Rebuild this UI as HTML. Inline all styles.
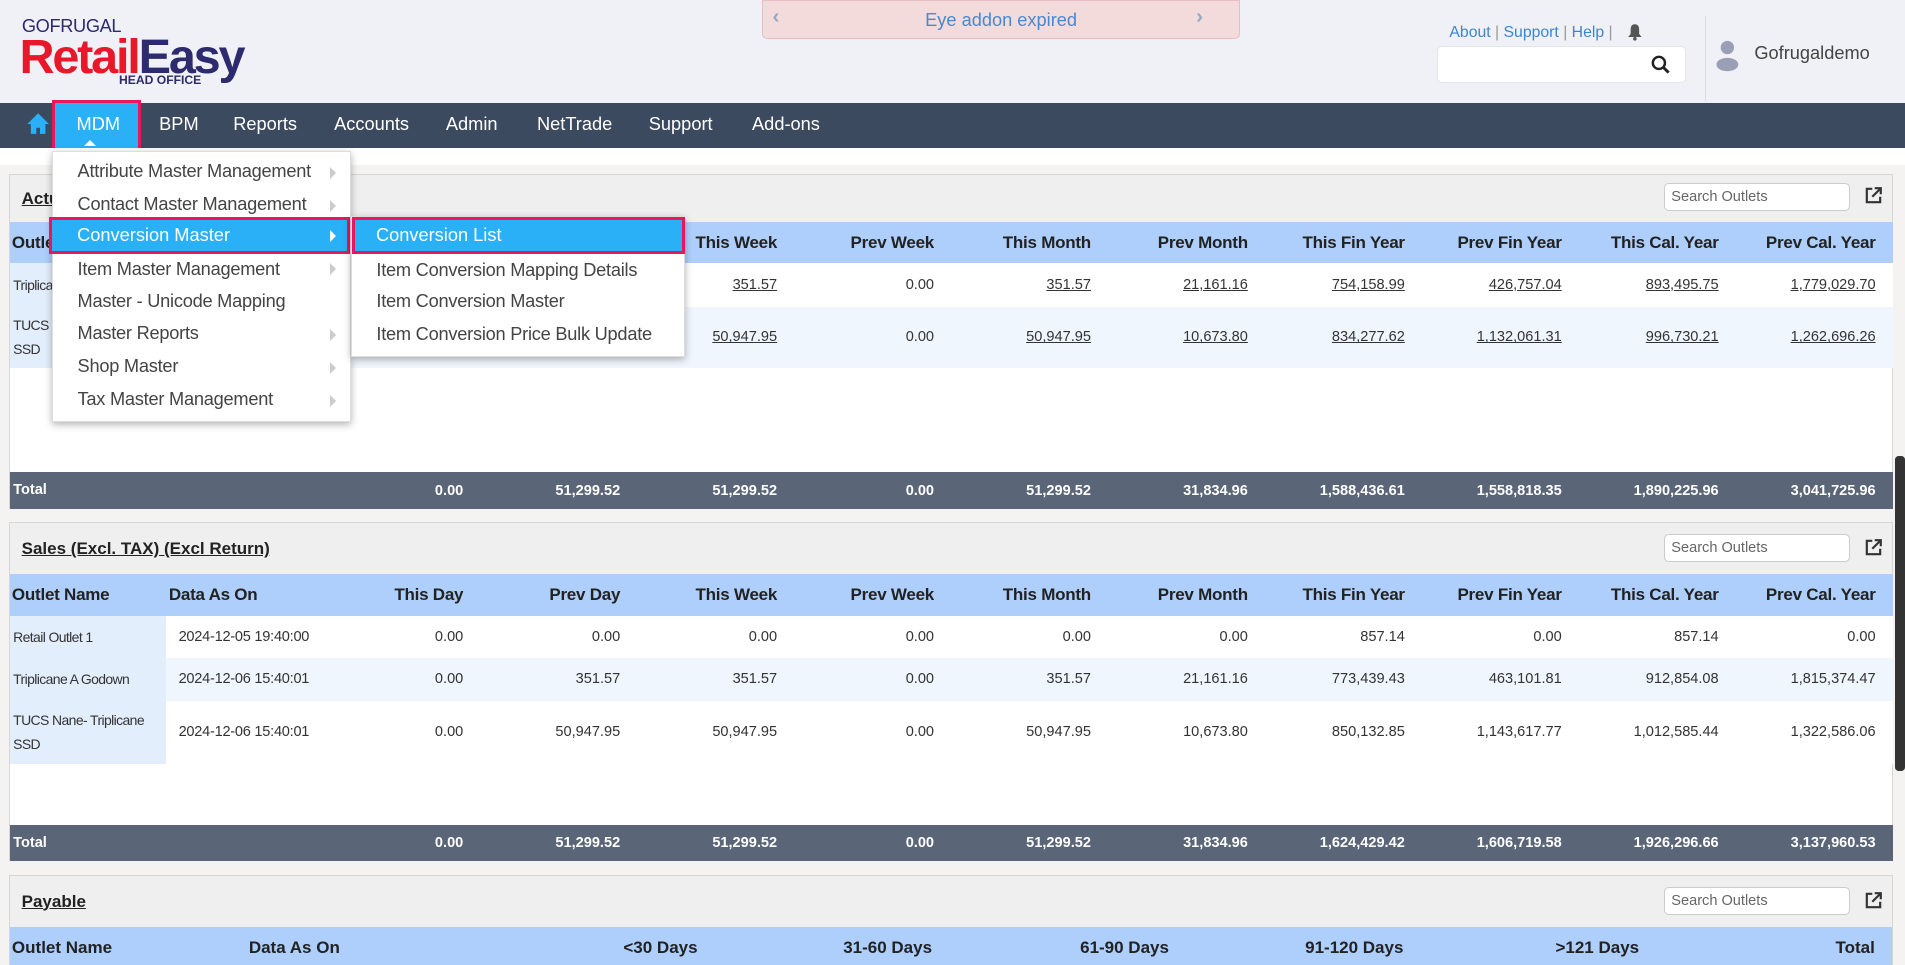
<!DOCTYPE html>
<html><head><meta charset="utf-8">
<style>
*{box-sizing:border-box;margin:0;padding:0}
html,body{width:1905px;height:964px;overflow:hidden}
body{zoom:1.21492;background:#f4f3f1;font-family:"Liberation Sans",sans-serif;color:#333;position:relative;width:1568px;height:794px}
.abs{position:absolute}
#hdr{left:0;top:0;width:1568px;height:85px;background:#f0f1f7}
#nav{left:0;top:85px;width:1568px;height:37px;background:#3b4a5f}
#nav span{position:absolute;top:9px;color:#fff;font-size:15px}
.panel{position:absolute;left:7px;width:1551px;border:1px solid #d6d6d6;background:#fff}
.ph{height:39px;background:#efefef;position:relative}
.ph .t{position:absolute;left:10px;top:12px;font-weight:bold;font-size:14px;text-decoration:underline;color:#222}
.ph .s{position:absolute;left:1362px;top:7px;width:153px;height:23px;border:1px solid #ccc;border-radius:4px;background:#fff;font-size:12px;color:#666;padding:4px 5px}
.ph svg{position:absolute;left:1527px;top:10px}
table{border-collapse:collapse;table-layout:fixed;width:1550px}
th{height:34px;background:#aecffc;font-size:14px;color:#222;text-align:right;padding-right:14px;white-space:nowrap;letter-spacing:-0.2px}
th.l{text-align:left;padding-left:2px}
td{font-size:12px;text-align:right;padding-right:14px;color:#333;white-space:nowrap}
td.l{text-align:left;padding-left:3px;padding-right:0;line-height:20px;white-space:normal;letter-spacing:-0.5px;font-size:11.5px}
td.d{text-align:left;padding-left:10px;letter-spacing:-0.2px}
tr.a td{background:#fff}
tr.b td{background:#f0f6fe}
td.o{background:#e3eefd!important}
tr.tot td{background:#5a6577;color:#fff;font-weight:bold;height:30px;font-size:12px;letter-spacing:0}
u{text-decoration:underline}
.menu{position:absolute;background:#fff;box-shadow:0 2px 6px rgba(0,0,0,.3);border:1px solid #ddd}
.mi{position:absolute;left:20px;font-size:15px;color:#444;letter-spacing:-0.2px}
.ar{position:absolute;width:0;height:0;border-top:5px solid transparent;border-bottom:5px solid transparent;border-left:5px solid #ccc}
</style></head><body>
<div id="hdr" class="abs">
  <div class="abs" style="left:18px;top:13px;font-size:15px;color:#2d2a6e;letter-spacing:-0.3px">GOFRUGAL</div>
  <div class="abs" style="left:16px;top:26px;font-size:40px;font-weight:bold;letter-spacing:-1.8px;line-height:42px"><span style="color:#e8172a">Retail</span><span style="color:#2d2a6e">Easy</span></div>
  <div class="abs" style="left:98px;top:60px;font-size:10px;font-weight:bold;color:#2d2a6e">HEAD OFFICE</div>
  <div class="abs" style="left:627px;top:0;width:394px;height:32px;background:#f3dadb;border:1px solid #e7bfc3;border-radius:0 0 4px 4px;text-align:center;color:#4a88cf;font-size:15px;padding-top:7px">Eye addon expired
    <span class="abs" style="left:8px;top:3px;color:#8fa9c7;font-size:17px;font-weight:bold">&#8249;</span>
    <span class="abs" style="right:30px;top:3px;color:#8fa9c7;font-size:17px;font-weight:bold">&#8250;</span></div>
  <div class="abs" style="left:1193px;top:20px;font-size:13px;color:#3d86cc">About <span style="color:#999">|</span> Support <span style="color:#999">|</span> Help <span style="color:#999">|</span></div>
  <svg class="abs" style="left:1339px;top:19px" width="13" height="15" viewBox="0 0 13 15"><path d="M6.5 1C4 1 3 3 3 5v4L1 11.5h11L10 9V5c0-2-1-4-3.5-4z" fill="#555"/><circle cx="6.5" cy="13" r="1.5" fill="#555"/></svg>
  <div class="abs" style="left:1183px;top:38px;width:205px;height:30px;background:#fff;border:1px solid #e4e4ea;border-radius:4px"></div>
  <svg class="abs" style="left:1359px;top:45px" width="16" height="16" viewBox="0 0 16 16"><circle cx="6.5" cy="6.5" r="5" fill="none" stroke="#222" stroke-width="2"/><path d="M10 10l4.5 4.5" stroke="#222" stroke-width="2.4"/></svg>
  <div class="abs" style="left:1403px;top:13px;width:1px;height:70px;background:#dcdde3"></div>
  <svg class="abs" style="left:1411px;top:32px" width="22" height="28" viewBox="0 0 22 28"><circle cx="11" cy="7" r="5.5" fill="#9a9fb5"/><ellipse cx="11" cy="21" rx="9" ry="5.5" fill="#9a9fb5"/></svg>
  <div class="abs" style="left:1444px;top:35px;font-size:15px;color:#444">Gofrugaldemo</div>
</div>
<div id="nav" class="abs">
  <svg class="abs" style="left:21px;top:7px" width="20" height="19" viewBox="0 0 20 19"><path d="M10 1L1 10h3v8h4.5v-5h3v5H16v-8h3z" fill="#2ab0f7"/></svg>
  <div class="abs" style="left:43px;top:-3px;width:73px;height:43px;border:3px solid #e8175d;background:#2ab0f7"></div>
  <span style="left:63px">MDM</span>
  <div class="abs" style="left:69px;top:30px;border-left:5px solid transparent;border-right:5px solid transparent;border-bottom:5px solid #fff"></div>
  <span style="left:131px">BPM</span><span style="left:192px">Reports</span><span style="left:275px">Accounts</span><span style="left:367px">Admin</span><span style="left:442px">NetTrade</span><span style="left:534px">Support</span><span style="left:619px">Add-ons</span>
</div>
<div class="abs" style="left:0;top:122px;width:1568px;height:14px;background:#fff"></div>

<div class="panel" style="top:143px;height:276px">
 <div class="ph"><div class="t">Actual Sales</div><div class="s">Search Outlets</div><svg width="14" height="14" viewBox="0 0 14 14"><path d="M6 1.5H1.5v11h11V8" fill="none" stroke="#333" stroke-width="1.8"/><path d="M8 1h5v5M13 1L6 8" fill="none" stroke="#333" stroke-width="1.8"/></svg></div>
 <table>
  <tr><th class="l">Outlet Name</th><th class="l">Data As On</th><th>This Day</th><th>Prev Day</th><th>This Week</th><th>Prev Week</th><th>This Month</th><th>Prev Month</th><th>This Fin Year</th><th>Prev Fin Year</th><th>This Cal. Year</th><th>Prev Cal. Year</th></tr>
  <tr class="a" style="height:36px"><td class="l o">Triplicane A Godown</td><td class="d">2024-12-06 15:40:01</td><td>0.00</td><td><u>351.57</u></td><td><u>351.57</u></td><td>0.00</td><td><u>351.57</u></td><td><u>21,161.16</u></td><td><u>754,158.99</u></td><td><u>426,757.04</u></td><td><u>893,495.75</u></td><td><u>1,779,029.70</u></td></tr>
  <tr class="b" style="height:50px"><td class="l o">TUCS Nane- Triplicane SSD</td><td class="d">2024-12-06 15:40:01</td><td>0.00</td><td><u>50,947.95</u></td><td><u>50,947.95</u></td><td>0.00</td><td><u>50,947.95</u></td><td><u>10,673.80</u></td><td><u>834,277.62</u></td><td><u>1,132,061.31</u></td><td><u>996,730.21</u></td><td><u>1,262,696.26</u></td></tr>
  <tr style="height:86px"><td colspan="12"></td></tr>
  <tr class="tot"><td class="l">Total</td><td></td><td>0.00</td><td>51,299.52</td><td>51,299.52</td><td>0.00</td><td>51,299.52</td><td>31,834.96</td><td>1,588,436.61</td><td>1,558,818.35</td><td>1,890,225.96</td><td>3,041,725.96</td></tr>
 </table>
</div>

<div class="panel" style="top:430px;height:279px">
 <div class="ph" style="height:42px"><div class="t" style="top:13px">Sales (Excl. TAX) (Excl Return)</div><div class="s" style="top:9px">Search Outlets</div><svg width="14" height="14" viewBox="0 0 14 14" style="top:13px"><path d="M6 1.5H1.5v11h11V8" fill="none" stroke="#333" stroke-width="1.8"/><path d="M8 1h5v5M13 1L6 8" fill="none" stroke="#333" stroke-width="1.8"/></svg></div>
 <table>
  <tr><th class="l">Outlet Name</th><th class="l">Data As On</th><th>This Day</th><th>Prev Day</th><th>This Week</th><th>Prev Week</th><th>This Month</th><th>Prev Month</th><th>This Fin Year</th><th>Prev Fin Year</th><th>This Cal. Year</th><th>Prev Cal. Year</th></tr>
  <tr class="a" style="height:35px"><td class="l o">Retail Outlet 1</td><td class="d">2024-12-05 19:40:00</td><td>0.00</td><td>0.00</td><td>0.00</td><td>0.00</td><td>0.00</td><td>0.00</td><td>857.14</td><td>0.00</td><td>857.14</td><td>0.00</td></tr>
  <tr class="b" style="height:35px"><td class="l o">Triplicane A Godown</td><td class="d">2024-12-06 15:40:01</td><td>0.00</td><td>351.57</td><td>351.57</td><td>0.00</td><td>351.57</td><td>21,161.16</td><td>773,439.43</td><td>463,101.81</td><td>912,854.08</td><td>1,815,374.47</td></tr>
  <tr class="a" style="height:52px"><td class="l o">TUCS Nane- Triplicane SSD</td><td class="d">2024-12-06 15:40:01</td><td>0.00</td><td>50,947.95</td><td>50,947.95</td><td>0.00</td><td>50,947.95</td><td>10,673.80</td><td>850,132.85</td><td>1,143,617.77</td><td>1,012,585.44</td><td>1,322,586.06</td></tr>
  <tr style="height:50px"><td colspan="12"></td></tr>
  <tr class="tot"><td class="l">Total</td><td></td><td>0.00</td><td>51,299.52</td><td>51,299.52</td><td>0.00</td><td>51,299.52</td><td>31,834.96</td><td>1,624,429.42</td><td>1,606,719.58</td><td>1,926,296.66</td><td>3,137,960.53</td></tr>
 </table>
</div>

<div class="panel" style="top:720px;height:80px">
 <div class="ph" style="height:42px"><div class="t" style="top:13px">Payable</div><div class="s" style="top:9px">Search Outlets</div><svg width="14" height="14" viewBox="0 0 14 14" style="top:13px"><path d="M6 1.5H1.5v11h11V8" fill="none" stroke="#333" stroke-width="1.8"/><path d="M8 1h5v5M13 1L6 8" fill="none" stroke="#333" stroke-width="1.8"/></svg></div>
 <div style="position:relative;height:40px;background:#aecffc;font-weight:bold;font-size:14px;color:#222">
  <span class="abs" style="left:2px;top:9px">Outlet Name</span>
  <span class="abs" style="left:197px;top:9px">Data As On</span>
  <span class="abs" style="right:983px;top:9px">&lt;30 Days</span>
  <span class="abs" style="right:790px;top:9px">31-60 Days</span>
  <span class="abs" style="right:595px;top:9px">61-90 Days</span>
  <span class="abs" style="right:402px;top:9px">91-120 Days</span>
  <span class="abs" style="right:208px;top:9px">&gt;121 Days</span>
  <span class="abs" style="right:14px;top:9px">Total</span>
 </div>
</div>
<div class="abs" style="left:1560px;top:375px;width:8px;height:260px;background:#333;border-radius:3px"></div>

<div class="menu" style="left:43px;top:124px;width:246px;height:223px">
 <div class="mi" style="top:8px">Attribute Master Management</div><div class="ar" style="left:228px;top:13px"></div>
 <div class="mi" style="top:35px">Contact Master Management</div><div class="ar" style="left:228px;top:40px"></div>
 <div class="mi" style="top:88px">Item Master Management</div><div class="ar" style="left:228px;top:92px"></div>
 <div class="mi" style="top:115px">Master - Unicode Mapping</div>
 <div class="mi" style="top:141px">Master Reports</div><div class="ar" style="left:228px;top:146px"></div>
 <div class="mi" style="top:168px">Shop Master</div><div class="ar" style="left:228px;top:173px"></div>
 <div class="mi" style="top:195px">Tax Master Management</div><div class="ar" style="left:228px;top:200px"></div>
</div>
<div class="abs" style="left:40px;top:179px;width:248px;height:30px;border:3px solid #e8175d;background:#2ab0f7;color:#fff;font-size:15px;padding:4px 0 0 21px">Conversion Master<div class="ar" style="left:229px;top:8px;border-left-color:#fff"></div></div>
<div class="menu" style="left:289px;top:178px;width:275px;height:116px">
 <div class="mi" style="top:35px">Item Conversion Mapping Details</div>
 <div class="mi" style="top:61px">Item Conversion Master</div>
 <div class="mi" style="top:88px">Item Conversion Price Bulk Update</div>
</div>
<div class="abs" style="left:290px;top:179px;width:274px;height:30px;border:3px solid #e8175d;background:#2ab0f7;color:#fff;font-size:15px;padding:4px 0 0 17px">Conversion List</div>
</body></html>
